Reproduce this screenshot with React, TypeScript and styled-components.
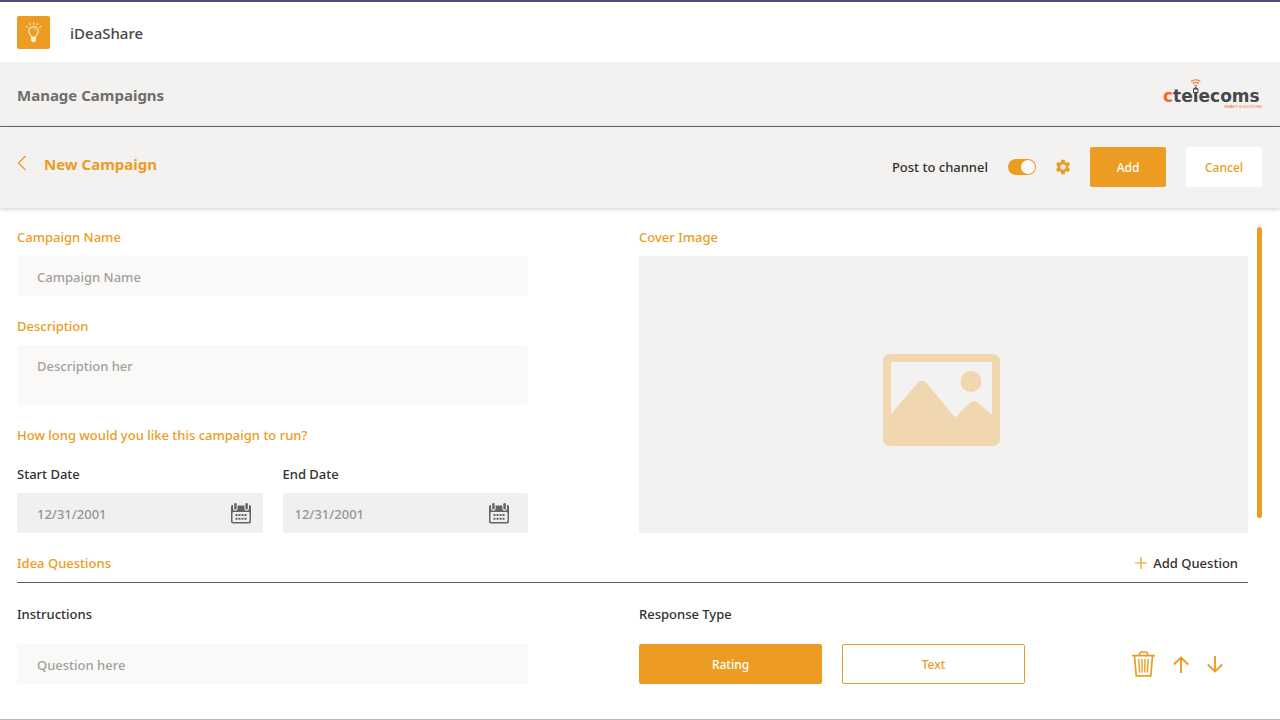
import React from "react";
import styled, { createGlobalStyle, css } from "styled-components";
import { MdSettings } from "react-icons/md";

const orange = "#ec9c22";
const ink = "#323130";

const GlobalStyle = createGlobalStyle`
  *, *::before, *::after { box-sizing: border-box; }
  body { margin: 0; background: #fff; color: ${ink}; font: 500 13px/20px "Noto Sans", "Open Sans", sans-serif; }
  button, input, textarea { font: inherit; color: inherit; border: 0; margin: 0; padding: 0; }
  button { background: none; cursor: pointer; }
  svg { display: block; flex: none; }
  h1, h2, h3, p { margin: 0; }
`;

const Page = styled.div`
  display: flex;
  flex-direction: column;
  min-height: 100vh;
  border-top: 2px solid #4f4c7c;
  border-bottom: 1px solid #b9b9b9;
`;

const AppBar = styled.header`
  display: flex;
  align-items: center;
  gap: 20px;
  height: 60px;
  padding: 0 17px;
`;

const AppTile = styled.span`
  display: grid;
  place-items: center;
  width: 33px;
  height: 33px;
  border-radius: 2px;
  background: ${orange};
`;

const AppName = styled.p`
  padding-top: 2px;
  font-size: 15px;
  color: #484644;
`;

const Band = styled.div`
  display: flex;
  align-items: center;
  justify-content: space-between;
  height: 65px;
  padding: 0 17px;
  background: #f3f2f1;
  border-bottom: 1px solid #6b6967;
`;

const BandTitle = styled.h1`
  padding-top: 2px;
  font-size: 15px;
  font-weight: 700;
  color: #6f6d6b;
`;

const Toolbar = styled.div`
  display: flex;
  align-items: center;
  justify-content: space-between;
  height: 81px;
  padding: 0 18px 2px 17px;
  background: #f3f2f1;
  box-shadow: 0 1px 5px rgba(0, 0, 0, 0.2);
`;

const Crumb = styled.div`
  display: flex;
  align-items: center;
  gap: 17px;
  padding-bottom: 7px;
`;

const CrumbTitle = styled.h2`
  padding-top: 2px;
  font-size: 15px;
  font-weight: 700;
  color: ${orange};
`;

const Actions = styled.div`
  display: flex;
  align-items: center;
  gap: 18px;
`;

const SwitchLabel = styled.label`
  display: flex;
  align-items: center;
  gap: 20px;
`;

const Switch = styled.input`
  appearance: none;
  display: flex;
  align-items: center;
  justify-content: flex-end;
  width: 28px;
  height: 16px;
  padding: 1px;
  border-radius: 8px;
  background: ${orange};

  &::before {
    content: "";
    width: 14px;
    height: 14px;
    border-radius: 7px;
    background: #faf9f8;
  }

  &:not(:checked) {
    justify-content: flex-start;
    background: #8a8886;
  }
`;

const IconButton = styled.button`
  display: grid;
  place-items: center;
  color: ${orange};
`;

const Buttons = styled.div`
  display: flex;
  gap: 20px;
`;

const Button = styled.button<{ $kind: "solid" | "plain" | "outline"; $wide?: boolean }>`
  height: 40px;
  width: ${(p) => (p.$wide ? "183px" : "76px")};
  padding-top: 2px;
  border-radius: 2px;
  font-size: 12px;
  ${(p) =>
    p.$kind === "solid"
      ? css`background: ${orange}; color: #fff;`
      : css`background: #fff; color: ${orange};`}
  ${(p) => p.$kind === "outline" && css`border: 1px solid ${orange};`}
`;

const Body = styled.main`
  display: flex;
  gap: 9px;
  flex: 1;
  padding: 19px 18px 32px 17px;
`;

const Content = styled.div`
  flex: 1;
  min-width: 0;
`;

const ScrollThumb = styled.div`
  width: 5px;
  height: 291px;
  border-radius: 3px;
  background: ${orange};
`;

const Columns = styled.div`
  display: grid;
  grid-template-columns: 511fr 609fr;
  column-gap: 111px;
`;

const Stack = styled.div<{ $gap: number }>`
  display: flex;
  flex-direction: column;
  gap: ${(p) => p.$gap}px;
`;

const Field = styled.div<{ $gap?: number }>`
  display: flex;
  flex-direction: column;
  gap: ${(p) => p.$gap ?? 9}px;
`;

const Label = styled.label<{ $accent?: boolean }>`
  color: ${(p) => (p.$accent ? orange : ink)};
`;

const fieldLook = css`
  display: block;
  width: 100%;
  padding: 0 20px;
  border-radius: 2px;
  background: #faf9f8;
  outline-color: ${orange};

  &::placeholder { color: #a19f9d; opacity: 1; }
`;

const TextInput = styled.input`
  ${fieldLook}
  height: 40px;
  padding-top: 2px;
`;

const TextArea = styled.textarea`
  ${fieldLook}
  height: 60px;
  padding-top: 11px;
  resize: none;
`;

const Dates = styled.div`
  display: grid;
  grid-template-columns: 1fr 1fr;
  gap: 20px;
`;

const DateBox = styled.div<{ $inset: number }>`
  display: flex;
  align-items: center;
  height: 40px;
  padding: 0 ${(p) => (p.$inset === 20 ? 12 : 19)}px 0 ${(p) => p.$inset}px;
  border-radius: 2px;
  background: #f0f0f0;
  color: #666462;
`;

const DateInput = styled.input`
  flex: 1;
  min-width: 0;
  padding-top: 2px;
  background: none;
  outline: 0;

  &::placeholder { color: #979593; opacity: 1; }
`;

const Cover = styled.button`
  display: grid;
  place-items: center;
  flex: 1;
  padding: 10px 5px 0 0;
  background: #f3f2f1;
`;

const SectionHead = styled.div`
  display: flex;
  justify-content: space-between;
  margin-top: 20px;
  padding: 0 10px 9px 0;
  border-bottom: 1px solid #605e5c;
`;

const SectionTitle = styled.h3`
  font: inherit;
  color: ${orange};
`;

const AddQuestion = styled.button`
  display: flex;
  align-items: center;
  gap: 6px;
`;

const QuestionRow = styled(Columns)`
  margin-top: 21px;
`;

const Responses = styled.div`
  display: flex;
  align-items: center;
  gap: 20px;
`;

const RowTools = styled.div`
  display: flex;
  align-items: center;
  gap: 18px;
  margin-left: auto;
  padding-right: 25px;
`;

const Bulb = () => (
  <svg width="17" height="20" viewBox="0 0 17 20" fill="none" stroke="#fdebcf" strokeWidth="1.100">
    <path d="M6.500 15c0-2-2.700-2.700-2.700-5.700a4.700 4.700 0 0 1 9.400 0c0 3-2.700 3.700-2.700 5.700z" />
    <path d="M8.500 6.600a2.500 2.500 0 0 1 2.300 2" strokeWidth=".7" />
    <path d="M6.500 15.500h4v3h-1v1h-2v-1h-1z" fill="#fdebcf" />
    <path d="M8.500 .5v2.300M4.500 1.200l.9 2M12.500 1.200l-.9 2M.8 4.200l2 1.200M16.200 4.200l-2 1.200" />
  </svg>
);

const Back = () => (
  <svg width="10" height="16" viewBox="0 0 10 16" fill="none" stroke="currentColor" strokeWidth="1.200">
    <path d="M8.500 1 1.500 8l7 7" />
  </svg>
);

const Calendar = () => (
  <svg width="20" height="21" viewBox="0 0 20 21" fill="currentColor">
    <path
      fillRule="evenodd"
      d="M0 3.500Q0 2 1.500 2H2v3.500A2.300 2.300 0 0 0 6.600 5.500V2.500h6.800v3a2.300 2.300 0 0 0 4.600 0V2h.5Q20 2 20 3.500v15q0 2-2 2H2q-2 0-2-2zM1.500 10v8q0 1 1 1h15q1 0 1-1V10q0-1-1-1h-15q-1 0-1 1z"
    />
    <rect x="3.200" y="0" width="2.400" height="6.500" rx="1.200" />
    <rect x="14.400" y="0" width="2.400" height="6.500" rx="1.200" />
    <path d="M4.500 11h2v2h-2zM7.500 11h2v2h-2zM10.500 11h2v2h-2zM13.500 11h2v2h-2zM4.500 14.800h2v2h-2zM7.500 14.800h2v2h-2zM10.500 14.800h2v2h-2zM13.500 14.800h2v2h-2z" />
  </svg>
);

const Picture = () => (
  <svg width="117" height="92" viewBox="0 0 117 92" fill="#f0d7b0">
    <path
      fillRule="evenodd"
      d="M8 0h101q8 0 8 8v76q0 8-8 8H8q-8 0-8-8V8Q0 0 8 0zM8 8v52L34.500 29q4.500-4.500 9 0L72 63.500l15-14.800q4-3.500 8 0L109 61V8z"
    />
    <circle cx="88" cy="27.500" r="10.500" />
  </svg>
);

const Plus = () => (
  <svg width="12" height="20" viewBox="0 0 12 20" stroke={orange} strokeWidth="1.200">
    <path d="M6 4v12M0 10h12" />
  </svg>
);

const Trash = () => (
  <svg width="23" height="26" viewBox="0 0 23 26" fill="none" stroke="currentColor" strokeWidth="1.700">
    <path d="M0 4.700h23M7.500 4.500V3q0-2 2-2h4q2 0 2 2v1.500M2.500 5l1.700 19.800h14.600L20.500 5" />
    <path d="M6.800 8l.8 13.500M10 8l.2 13.500M13 8l-.2 13.500M16.200 8l-.8 13.500" strokeWidth="1.400" />
  </svg>
);

const Arrow = ({ down }: { down?: boolean }) => (
  <svg width="16" height="17" viewBox="0 0 16 17" fill="none" stroke="currentColor" strokeWidth="1.900">
    <path d={down ? "M8 0v15.500M.800 8.500 8 15.500l7.200-7" : "M8 17V1.500M.800 8.500 8 1.500l7.200 7"} />
  </svg>
);

const Logo = () => (
  <svg width="101" height="32" viewBox="0 0 101 32" role="img" aria-label="ctelecoms smart solutions">
    <text x="1" y="24" fontFamily="DejaVu Sans" fontSize="17" fontWeight="700" fill="#48484a">
      <tspan fill="#ee6a2c">c</tspan>telecoms
    </text>
    <text x="100" y="30" textAnchor="end" fontFamily="Liberation Sans" fontSize="4" fill="#ee6a2c">
      SMART SOLUTIONS
    </text>
    <g fill="none" stroke="#ee7a40" strokeWidth="1.200">
      <path d="M29 3.500q4.700-3.500 9.400 0M30.700 5.600q3-2.500 6 0M32.300 7.600q1.400-1.200 2.800 0" />
    </g>
    <path d="M33.700 8.500v3" stroke="#48484a" strokeWidth="1.500" />
    <rect x="31.500" y="11" width="4.400" height="3.500" fill="#f3f2f1" stroke="#48484a" />
  </svg>
);

function DateField({ id, label, inset }: { id: string; label: string; inset: number }) {
  return (
    <Field>
      <Label htmlFor={id}>{label}</Label>
      <DateBox $inset={inset}>
        <DateInput id={id} placeholder="12/31/2001" />
        <button type="button" aria-label={`Choose ${label}`}>
          <Calendar />
        </button>
      </DateBox>
    </Field>
  );
}

export default function App() {
  return (
    <Page>
      <GlobalStyle />
      <AppBar>
        <AppTile>
          <Bulb />
        </AppTile>
        <AppName>iDeaShare</AppName>
      </AppBar>
      <Band>
        <BandTitle>Manage Campaigns</BandTitle>
        <Logo />
      </Band>
      <Toolbar>
        <Crumb>
          <IconButton type="button" aria-label="Back">
            <Back />
          </IconButton>
          <CrumbTitle>New Campaign</CrumbTitle>
        </Crumb>
        <Actions>
          <SwitchLabel>
            Post to channel
            <Switch type="checkbox" role="switch" defaultChecked />
          </SwitchLabel>
          <IconButton type="button" aria-label="Settings">
            <MdSettings size={18} />
          </IconButton>
          <Buttons>
            <Button type="button" $kind="solid">Add</Button>
            <Button type="button" $kind="plain">Cancel</Button>
          </Buttons>
        </Actions>
      </Toolbar>
      <Body>
        <Content>
          <Columns>
            <Stack $gap={20}>
              <Field>
                <Label $accent htmlFor="name">Campaign Name</Label>
                <TextInput id="name" placeholder="Campaign Name" />
              </Field>
              <Field>
                <Label $accent htmlFor="description">Description</Label>
                <TextArea id="description" placeholder="Description her" />
              </Field>
              <Field $gap={19}>
                <SectionTitle>How long would you like this campaign to run?</SectionTitle>
                <Dates>
                  <DateField id="start" label="Start Date" inset={20} />
                  <DateField id="end" label="End Date" inset={12} />
                </Dates>
              </Field>
            </Stack>
            <Field>
              <Label $accent htmlFor="cover">Cover Image</Label>
              <Cover id="cover" type="button">
                <Picture />
              </Cover>
            </Field>
          </Columns>
          <SectionHead>
            <SectionTitle>Idea Questions</SectionTitle>
            <AddQuestion type="button">
              <Plus />
              Add Question
            </AddQuestion>
          </SectionHead>
          <QuestionRow>
            <Field $gap={20}>
              <Label htmlFor="question">Instructions</Label>
              <TextInput id="question" placeholder="Question here" />
            </Field>
            <Field $gap={20}>
              <p>Response Type</p>
              <Responses>
                <Button type="button" $kind="solid" $wide>Rating</Button>
                <Button type="button" $kind="outline" $wide>Text</Button>
                <RowTools>
                  <IconButton type="button" aria-label="Delete question"><Trash /></IconButton>
                  <IconButton type="button" aria-label="Move up"><Arrow /></IconButton>
                  <IconButton type="button" aria-label="Move down"><Arrow down /></IconButton>
                </RowTools>
              </Responses>
            </Field>
          </QuestionRow>
        </Content>
        <ScrollThumb />
      </Body>
    </Page>
  );
}
